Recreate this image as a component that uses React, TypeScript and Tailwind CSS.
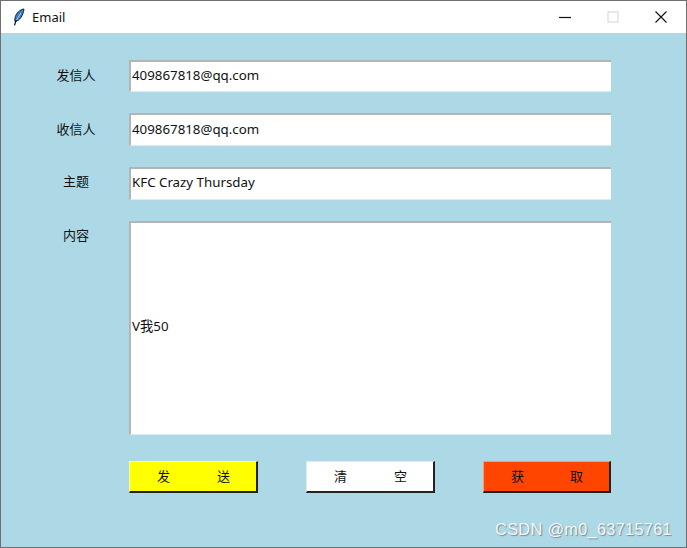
const fields = [
  { label: "发信人", value: "409867818@qq.com", height: "h-[32px]", textPad: "pb-[2px]", labelPad: "pb-0" },
  { label: "收信人", value: "409867818@qq.com", height: "h-[33px]", textPad: "pb-0", labelPad: "pb-0" },
  { label: "主题", value: "KFC Crazy Thursday", height: "h-[33px]", textPad: "pb-[2px]", labelPad: "pb-[3px]" },
];

const buttons = [
  { left: "发", right: "送", color: "w-[129px] bg-[#ffff00] border-t-[#ffffb0] border-l-[#ffffb0]" },
  { left: "清", right: "空", color: "w-[129px] bg-white border-t-[#e8e8e8] border-l-[#e8e8e8]" },
  { left: "获", right: "取", color: "w-[128px] bg-[#ff4500] border-t-[#ff9a78] border-l-[#ff9a78]" },
];

function Feather() {
  return (
    <svg width="12" height="18" viewBox="0 0 12 18" fill="none">
      <path d="M11 1C7 1.5 3 5 2 10c-.3 1.5-.2 2.8 0 3.6C6.5 13 10 8 11 1Z" fill="#3f7fc4" stroke="#10233a" strokeWidth="1" />
      <path d="M8 5 3.6 12" stroke="#c6dcf2" strokeWidth="0.8" />
      <path d="M3 12.5 1.6 17" stroke="#111" strokeWidth="1.2" strokeLinecap="round" />
    </svg>
  );
}

export default function App() {
  return (
    <div className="flex h-[548px] w-[687px] flex-col overflow-hidden border border-[#6f6f6f] bg-[#add8e6] font-['Noto_Sans','Noto_Sans_CJK_SC',sans-serif] text-[13.3px] text-[#111]">
      <header className="flex h-[32px] shrink-0 items-center bg-white pl-[12px]">
        <Feather />
        <span className="ml-[7px] text-[13px] leading-none">Email</span>
        <div className="ml-auto flex items-center">
          <svg width="12" height="12" viewBox="0 0 12 12" className="mr-[36px]">
            <path d="M0 6.5h12" stroke="#111" strokeWidth="1.2" />
          </svg>
          <svg width="12" height="12" viewBox="0 0 12 12" className="mr-[36px]">
            <rect x="1" y="1" width="10" height="10" fill="none" stroke="#d4d4d4" strokeWidth="1" />
          </svg>
          <svg width="12" height="12" viewBox="0 0 12 12" className="mr-[19px]">
            <path d="M.5.5l11 11M11.5.5l-11 11" stroke="#111" strokeWidth="1.1" />
          </svg>
        </div>
      </header>

      <main className="flex flex-col pl-[128px] pt-[27px]">
        <div className="flex w-[482px] flex-col gap-[21px]">
          {fields.map((field) => (
            <div key={field.label} className="relative">
              <span
                className={`absolute left-[-128px] top-0 flex h-full w-[150px] items-center justify-center text-[13px] ${field.labelPad}`}
              >
                {field.label}
              </span>
              <div
                className={`flex items-center border-b border-l-2 border-t-2 border-b-[#d8edf4] border-l-[#b4b4b4] border-t-[#b4b4b4] bg-white pl-[1px] leading-none ${field.height} ${field.textPad}`}
              >
                {field.value}
              </div>
            </div>
          ))}
          <div className="relative">
            <span className="absolute left-[-128px] top-[5px] flex w-[150px] justify-center text-[13px] leading-[18px]">
              内容
            </span>
            <div className="flex h-[214px] items-center border-b border-l-2 border-t-2 border-b-[#d8edf4] border-l-[#b4b4b4] border-t-[#b4b4b4] bg-white pb-[4px] pl-[1px] leading-none">
              V我50
            </div>
          </div>
        </div>

        <div className="mt-[26px] flex w-[482px] justify-between">
          {buttons.map((button) => (
            <div
              key={button.left}
              className={`flex h-[32px] items-center justify-between border-b-2 border-l border-r-2 border-t border-b-[#222] border-r-[#222] pl-[27px] pr-[26px] text-[13px] ${button.color}`}
            >
              <span>{button.left}</span>
              <span>{button.right}</span>
            </div>
          ))}
        </div>
      </main>

      <div className="mt-[27px] pr-[14px] text-right font-['Liberation_Sans',sans-serif] text-[16.3px] leading-[18px] tracking-[0.33px] text-[#f2f6f8] [text-shadow:1px_1px_1px_#7f8a90]">
        CSDN @m0_63715761
      </div>
    </div>
  );
}
